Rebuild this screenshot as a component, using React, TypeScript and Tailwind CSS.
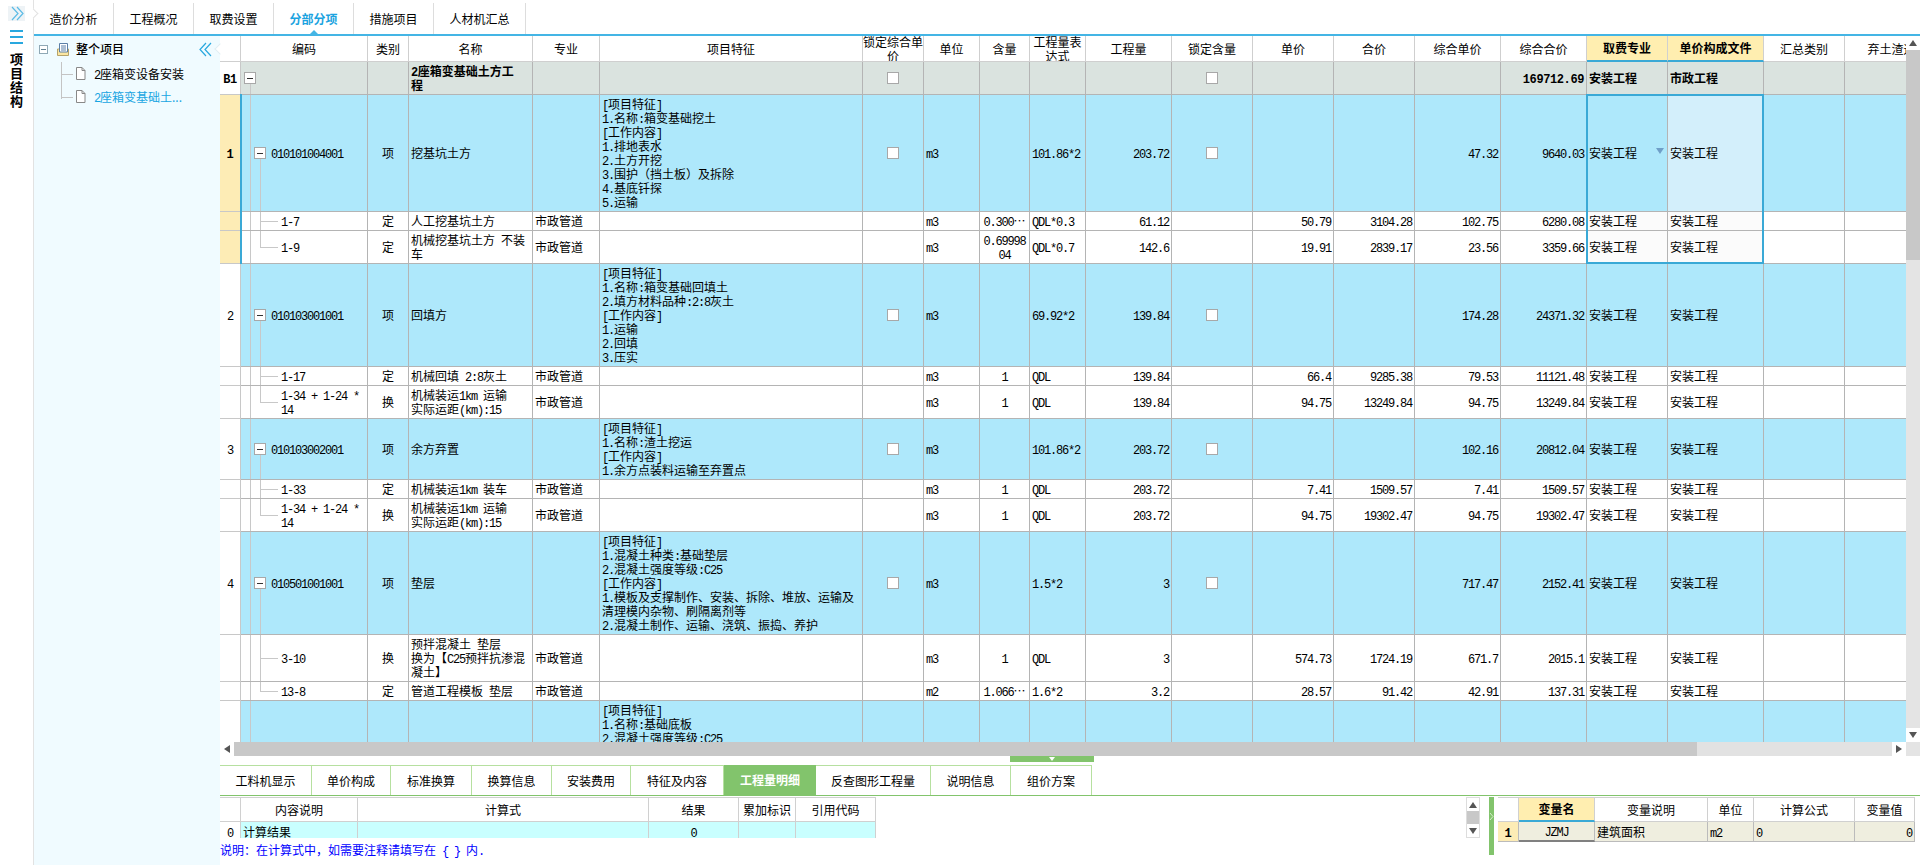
import React from "react";

const Txt = ({ s, bold }: { s: string; bold?: boolean }) => (
  <>
    {s.split(/([\x20-\x7e]+)/).map((p, i) =>
      /^[\x20-\x7e]+$/.test(p) ? (
        <span
          key={i}
          className={
            bold
              ? "font-['Liberation_Mono',monospace] leading-[0] tracking-[-0.4px]"
              : "font-['Liberation_Mono',monospace] leading-[0] tracking-[-1.2px]"
          }
        >
          {p}
        </span>
      ) : (
        p
      )
    )}
  </>
);

const Tri = ({ dir, color = "#555" }: { dir: "up" | "down" | "left" | "right"; color?: string }) => {
  const pts = {
    up: "4,1 8,7 0,7",
    down: "0,1 8,1 4,7",
    left: "7,0 7,8 1,4",
    right: "1,0 1,8 7,4",
  }[dir];
  return (
    <svg width="8" height="8" viewBox="0 0 8 8">
      <polygon points={pts} fill={color} />
    </svg>
  );
};

const Chevrons = ({ flip, color = "#29a8df" }: { flip?: boolean; color?: string }) => (
  <svg width="14" height="15" viewBox="0 0 14 15" fill="none" stroke={color} strokeWidth="1.2">
    {flip ? (
      <>
        <path d="M7 1 L1 7.5 L7 14" />
        <path d="M12 1 L6 7.5 L12 14" />
      </>
    ) : (
      <>
        <path d="M2 1 L8 7.5 L2 14" />
        <path d="M7 1 L13 7.5 L7 14" />
      </>
    )}
  </svg>
);

const DocIcon = () => (
  <svg width="11" height="13" viewBox="0 0 11 13" fill="#fff" stroke="#888" strokeWidth="1">
    <path d="M1.5 .5 H7 L10 3.5 V12.5 H1.5 Z" />
    <path d="M7 .5 V3.5 H10" fill="none" />
  </svg>
);

const RootIcon = () => (
  <svg width="12" height="13" viewBox="0 0 12 13" fill="none">
    <path d="M.5 6 H11.5 V12.5 H.5 Z" fill="#fbe6a2" stroke="#b5a36a" />
    <path d="M2.5 .5 H10.5 V9 H2.5 Z" fill="#fff" stroke="#5b7fa6" />
    <path d="M4 3 H9 M4 5 H9 M4 7 H9" stroke="#5b7fa6" />
  </svg>
);

const MinusBox = ({ cls }: { cls: string }) => (
  <span className={`absolute flex h-[12px] w-[12px] items-center justify-center border border-[#a8a8a8] bg-white ${cls}`}>
    <span className="h-[1px] w-[6px] bg-[#333]" />
  </span>
);

const Check = () => (
  <span className="mx-auto block h-[12px] w-[12px] border border-[#a8a8a8] bg-white" />
);

const topTabs = ["造价分析", "工程概况", "取费设置", "分部分项", "措施项目", "人材机汇总"];

const columns = [
  { w: "w-[21px]", t: "" },
  { w: "w-[127px]", t: "编码" },
  { w: "w-[41px]", t: "类别" },
  { w: "w-[124px]", t: "名称" },
  { w: "w-[67px]", t: "专业" },
  { w: "w-[263px]", t: "项目特征" },
  { w: "w-[61px]", t: "锁定综合单价" },
  { w: "w-[56px]", t: "单位" },
  { w: "w-[50px]", t: "含量" },
  { w: "w-[56px]", t: "工程量表达式" },
  { w: "w-[86px]", t: "工程量" },
  { w: "w-[81px]", t: "锁定含量" },
  { w: "w-[81px]", t: "单价" },
  { w: "w-[81px]", t: "合价" },
  { w: "w-[86px]", t: "综合单价" },
  { w: "w-[86px]", t: "综合合价" },
  { w: "w-[81px]", t: "取费专业" },
  { w: "w-[96px]", t: "单价构成文件" },
  { w: "w-[81px]", t: "汇总类别" },
  { w: "w-[106px]", t: "弃土渣运距" },
];

type Row = {
  idx?: string;
  code: string;
  kind: "bill" | "sub";
  last?: boolean;
  type: string;
  name: string;
  spec?: string;
  feature?: string;
  qty?: string;
  unit?: string;
  expr: string;
  amount: string;
  price?: string;
  total?: string;
  cprice: string;
  ctotal: string;
  h: string;
  selected?: boolean;
};

const rows: Row[] = [
  {
    idx: "1", code: "010101004001", kind: "bill", type: "项", name: "挖基坑土方",
    feature: "[项目特征]\n1.名称:箱变基础挖土\n[工作内容]\n1.排地表水\n2.土方开挖\n3.围护\uff08挡土板\uff09及拆除\n4.基底钎探\n5.运输",
    unit: "m3", expr: "101.86*2", amount: "203.72", cprice: "47.32", ctotal: "9640.03", h: "h-[117px]", selected: true,
  },
  {
    code: "1-7", kind: "sub", type: "定", name: "人工挖基坑土方", spec: "市政管道", unit: "m3", qty: "0.300⋯", expr: "QDL*0.3",
    amount: "61.12", price: "50.79", total: "3104.28", cprice: "102.75", ctotal: "6280.08", h: "h-[19px]", selected: true,
  },
  {
    code: "1-9", kind: "sub", last: true, type: "定", name: "机械挖基坑土方 不装车", spec: "市政管道", unit: "m3", qty: "0.69998\n04", expr: "QDL*0.7",
    amount: "142.6", price: "19.91", total: "2839.17", cprice: "23.56", ctotal: "3359.66", h: "h-[33px]", selected: true,
  },
  {
    idx: "2", code: "010103001001", kind: "bill", type: "项", name: "回填方",
    feature: "[项目特征]\n1.名称:箱变基础回填土\n2.填方材料品种:2:8灰土\n[工作内容]\n1.运输\n2.回填\n3.压实",
    unit: "m3", expr: "69.92*2", amount: "139.84", cprice: "174.28", ctotal: "24371.32", h: "h-[103px]",
  },
  {
    code: "1-17", kind: "sub", type: "定", name: "机械回填 2:8灰土", spec: "市政管道", unit: "m3", qty: "1", expr: "QDL",
    amount: "139.84", price: "66.4", total: "9285.38", cprice: "79.53", ctotal: "11121.48", h: "h-[19px]",
  },
  {
    code: "1-34 + 1-24 *\n14", kind: "sub", last: true, type: "换", name: "机械装运1km 运输\n实际运距(km):15", spec: "市政管道", unit: "m3", qty: "1", expr: "QDL",
    amount: "139.84", price: "94.75", total: "13249.84", cprice: "94.75", ctotal: "13249.84", h: "h-[33px]",
  },
  {
    idx: "3", code: "010103002001", kind: "bill", type: "项", name: "余方弃置",
    feature: "[项目特征]\n1.名称:渣土挖运\n[工作内容]\n1.余方点装料运输至弃置点",
    unit: "m3", expr: "101.86*2", amount: "203.72", cprice: "102.16", ctotal: "20812.04", h: "h-[61px]",
  },
  {
    code: "1-33", kind: "sub", type: "定", name: "机械装运1km 装车", spec: "市政管道", unit: "m3", qty: "1", expr: "QDL",
    amount: "203.72", price: "7.41", total: "1509.57", cprice: "7.41", ctotal: "1509.57", h: "h-[19px]",
  },
  {
    code: "1-34 + 1-24 *\n14", kind: "sub", last: true, type: "换", name: "机械装运1km 运输\n实际运距(km):15", spec: "市政管道", unit: "m3", qty: "1", expr: "QDL",
    amount: "203.72", price: "94.75", total: "19302.47", cprice: "94.75", ctotal: "19302.47", h: "h-[33px]",
  },
  {
    idx: "4", code: "010501001001", kind: "bill", type: "项", name: "垫层",
    feature: "[项目特征]\n1.混凝土种类:基础垫层\n2.混凝土强度等级:C25\n[工作内容]\n1.模板及支撑制作、安装、拆除、堆放、运输及\n清理模内杂物、刷隔离剂等\n2.混凝土制作、运输、浇筑、振捣、养护",
    unit: "m3", expr: "1.5*2", amount: "3", cprice: "717.47", ctotal: "2152.41", h: "h-[103px]",
  },
  {
    code: "3-10", kind: "sub", type: "换", name: "预拌混凝土 垫层\n换为【C25预拌抗渗混\n凝土】", spec: "市政管道", unit: "m3", qty: "1", expr: "QDL",
    amount: "3", price: "574.73", total: "1724.19", cprice: "671.7", ctotal: "2015.1", h: "h-[47px]",
  },
  {
    code: "13-8", kind: "sub", last: true, type: "定", name: "管道工程模板 垫层", spec: "市政管道", unit: "m2", qty: "1.066⋯", expr: "1.6*2",
    amount: "3.2", price: "28.57", total: "91.42", cprice: "42.91", ctotal: "137.31", h: "h-[19px]",
  },
];

const td = "border-r border-b border-[#b4b4b4] px-[2px] whitespace-pre-line overflow-hidden";

const DataRow = ({ r }: { r: Row }) => {
  const bg = r.kind === "bill" ? "bg-[#aee8fb]" : "bg-white";
  const sel2 = r.kind === "sub" && r.selected ? "bg-[#fbfbfb]" : bg;
  return (
    <tr className={r.h}>
      <td className={`border-r border-b border-[#c8c8c8] text-center ${r.selected ? "bg-[#fdecb5]" : "bg-white"} ${r.selected && r.idx ? "font-bold" : ""}`}>
        {r.idx && <Txt s={r.idx} bold={r.selected} />}
      </td>
      <td className={`relative ${td} ${bg}`}>
        <span className="absolute top-0 bottom-0 left-[9px] w-[1px] bg-[#c8c8c8]" />
        {r.kind === "bill" ? (
          <>
            <MinusBox cls="left-[13px] top-1/2 -mt-[6px]" />
            <span className="absolute top-1/2 bottom-0 left-[19px] mt-[6px] w-[1px] bg-[#c8c8c8]" />
            <div className="pl-[28px]"><Txt s={r.code} /></div>
          </>
        ) : (
          <>
            <span className={`absolute top-0 left-[19px] w-[1px] bg-[#c8c8c8] ${r.last ? "bottom-1/2" : "bottom-0"}`} />
            <span className="absolute top-1/2 left-[19px] h-[1px] w-[18px] bg-[#c8c8c8]" />
            <div className="pl-[38px]"><Txt s={r.code} /></div>
          </>
        )}
      </td>
      <td className={`${td} ${bg} text-center`}>{r.type}</td>
      <td className={`${td} ${bg}`}><Txt s={r.name} /></td>
      <td className={`${td} ${bg}`}>{r.spec}</td>
      <td className={`${td} ${bg}`}>{r.feature && <Txt s={r.feature} />}</td>
      <td className={`${td} ${bg}`}>{r.kind === "bill" && <Check />}</td>
      <td className={`${td} ${bg}`}><Txt s={r.unit ?? ""} /></td>
      <td className={`${td} ${bg} text-center`}>{r.qty && <Txt s={r.qty} />}</td>
      <td className={`${td} ${bg}`}><Txt s={r.expr} /></td>
      <td className={`${td} ${bg} text-right`}><Txt s={r.amount} /></td>
      <td className={`${td} ${bg}`}>{r.kind === "bill" && <Check />}</td>
      <td className={`${td} ${bg} text-right`}>{r.price && <Txt s={r.price} />}</td>
      <td className={`${td} ${bg} text-right`}>{r.total && <Txt s={r.total} />}</td>
      <td className={`${td} ${bg} text-right`}><Txt s={r.cprice} /></td>
      <td className={`${td} ${bg} text-right`}><Txt s={r.ctotal} /></td>
      <td className={`relative ${td} ${sel2}`}>
        安装工程
        {r.idx === "1" && (
          <span className="absolute top-1/2 right-[3px] -mt-[6px] flex">
            <Tri dir="down" color="#6f9fc8" />
          </span>
        )}
      </td>
      <td className={`${td} ${r.idx === "1" ? "bg-[#d3effb]" : sel2}`}>安装工程</td>
      <td className={`${td} ${bg}`} />
      <td className={`${td} ${bg}`} />
    </tr>
  );
};

const bottomTabs = ["工料机显示", "单价构成", "标准换算", "换算信息", "安装费用", "特征及内容", "工程量明细", "反查图形工程量", "说明信息", "组价方案"];
const tabWidths = ["w-[92px]", "w-[79px]", "w-[81px]", "w-[80px]", "w-[79px]", "w-[93px]", "w-[92px]", "w-[115px]", "w-[80px]", "w-[81px]"];

const App = () => {
  return (
    <div className="flex h-[865px] w-[1920px] overflow-hidden bg-white font-['Noto_Sans_CJK_SC',sans-serif] text-[12px] leading-[14px] text-black">
      <div className="flex w-[34px] shrink-0 flex-col items-center border-r border-[#e2e2e2]">
        <div className="mt-[6px] flex h-[15px] w-[17px] items-center justify-center bg-[#eef3f6]">
          <Chevrons color="#5bbbe6" />
        </div>
        <div className="mt-[9px] flex w-[13px] flex-col gap-[4px]">
          <span className="h-[2px] bg-[#29a8df]" />
          <span className="h-[2px] bg-[#29a8df]" />
          <span className="h-[2px] bg-[#29a8df]" />
        </div>
        <div className="mt-[8px] w-[13px] text-center text-[13px] leading-[14px] font-bold">项目结构</div>
      </div>

      <div className="flex min-w-0 flex-1 flex-col">
        <div className="flex h-[34px] items-end">
          {topTabs.map((t, i) => (
            <div
              key={t}
              className={`relative flex h-[31px] items-center justify-center border-r border-[#dddddd] ${i === 5 ? "w-[92px]" : "w-[80px]"} ${i === 3 ? "font-bold text-[#1ba3e0]" : ""}`}
            >
              {i === 0 && (
                <span className="absolute top-[7px] left-[-4px] h-[7px] w-[7px] rotate-45 border-t border-r border-[#e2e2e2] bg-white" />
              )}
              {t}
              {i === 3 && (
                <span className="absolute bottom-0 left-1/2 -ml-[4px] h-0 w-0 border-r-[4px] border-b-[4px] border-l-[4px] border-r-transparent border-b-[#44b5e5] border-l-transparent" />
              )}
            </div>
          ))}
        </div>
        <div className="h-[2px] bg-[#44b5e5]" />

        <div className="flex min-h-0 flex-1">
          <div className="relative w-[186px] shrink-0 bg-[#f0fbff]">
            <span className="absolute top-[9px] right-[-4px] h-[8px] w-[8px] rotate-45 border-b border-l border-[#dfeef3] bg-white" />
            <div className="flex h-[26px] items-center">
              <span className="ml-[5px] flex h-[9px] w-[9px] items-center justify-center border border-[#8fa8b5] bg-white">
                <span className="h-[1px] w-[5px] bg-[#5f7f90]" />
              </span>
              <span className="ml-[9px] flex"><RootIcon /></span>
              <span className="ml-[7px] font-medium">整个项目</span>
              <span className="relative mr-[7px] ml-auto flex"><Chevrons flip /></span>
            </div>
            <div className="relative mt-[0px] pl-[41px]">
              <span className="absolute top-0 left-[27px] h-[37px] w-[1px] bg-[#c4c4c4]" />
              <div className="relative flex h-[23px] items-center">
                <span className="absolute left-[-14px] top-[12px] h-[1px] w-[12px] bg-[#c4c4c4]" />
                <DocIcon />
                <span className="ml-[8px]"><Txt s="2" />座箱变设备安装</span>
              </div>
              <div className="relative flex h-[23px] items-center text-[#18a5e2]">
                <span className="absolute left-[-14px] top-[12px] h-[1px] w-[12px] bg-[#c4c4c4]" />
                <DocIcon />
                <span className="ml-[8px]"><Txt s="2" />座箱变基础土...</span>
              </div>
            </div>
          </div>

          <div className="flex min-w-0 flex-1 flex-col">
            <div className="flex h-[706px]">
              <div className="relative min-w-0 flex-1 overflow-hidden">
                <table className="w-[1731px] table-fixed border-separate border-spacing-0">
                  <colgroup>
                    {columns.map((c, i) => (
                      <col key={i} className={c.w} />
                    ))}
                  </colgroup>
                  <thead>
                    <tr className="h-[26px]">
                      {columns.map((c, i) => {
                        const hi = i === 16 || i === 17;
                        return (
                          <th
                            key={i}
                            className={`border-r ${hi ? "border-b-2 border-r-[#d0d0d0] border-b-[#3aa9d6] bg-[#ffeeb0] font-bold" : "border-b border-[#cfcfcf] font-normal"}`}
                          >
                            <div className={`flex items-center justify-center overflow-hidden ${hi ? "h-[24px]" : "h-[25px]"}`}>{c.t}</div>
                          </th>
                        );
                      })}
                    </tr>
                  </thead>
                  <tbody>
                    <tr className="h-[33px]">
                      <td className="border-r border-b border-[#c8c8c8] bg-white text-center font-bold"><Txt s="B1" bold /></td>
                      <td className={`relative ${td} bg-[#dae3df]`}>
                        <MinusBox cls="left-[3px] top-1/2 -mt-[6px]" />
                        <span className="absolute top-1/2 bottom-0 left-[9px] mt-[6px] w-[1px] bg-[#c8c8c8]" />
                      </td>
                      <td className={`${td} bg-[#dae3df]`} />
                      <td className={`${td} bg-[#dae3df] font-bold`}><Txt s={"2座箱变基础土方工\n程"} bold /></td>
                      <td className={`${td} bg-[#dae3df]`} />
                      <td className={`${td} bg-[#dae3df]`} />
                      <td className={`${td} bg-[#dae3df]`}><Check /></td>
                      <td className={`${td} bg-[#dae3df]`} />
                      <td className={`${td} bg-[#dae3df]`} />
                      <td className={`${td} bg-[#dae3df]`} />
                      <td className={`${td} bg-[#dae3df]`} />
                      <td className={`${td} bg-[#dae3df]`}><Check /></td>
                      <td className={`${td} bg-[#dae3df]`} />
                      <td className={`${td} bg-[#dae3df]`} />
                      <td className={`${td} bg-[#dae3df]`} />
                      <td className={`${td} bg-[#dae3df] text-right font-bold`}><Txt s="169712.69" bold /></td>
                      <td className={`${td} bg-[#dae3df] font-bold`}>安装工程</td>
                      <td className={`${td} bg-[#dae3df] font-bold`}>市政工程</td>
                      <td className={`${td} bg-[#dae3df]`} />
                      <td className={`${td} bg-[#dae3df]`} />
                    </tr>
                    {rows.map((r, i) => (
                      <DataRow key={i} r={r} />
                    ))}
                    <tr className="h-[100px]">
                      <td className="border-r border-[#c8c8c8] bg-white" />
                      <td className={`relative ${td} bg-[#aee8fb]`}>
                        <span className="absolute top-0 bottom-0 left-[9px] w-[1px] bg-[#c8c8c8]" />
                      </td>
                      <td className={`${td} bg-[#aee8fb]`} />
                      <td className={`${td} bg-[#aee8fb]`} />
                      <td className={`${td} bg-[#aee8fb]`} />
                      <td className={`${td} bg-[#aee8fb] align-top pt-[2px]`}>
                        <Txt s={"[项目特征]\n1.名称:基础底板\n2.混凝土强度等级:C25"} />
                      </td>
                      {columns.slice(6).map((_, i) => (
                        <td key={i} className={`${td} bg-[#aee8fb]`} />
                      ))}
                    </tr>
                  </tbody>
                </table>
                {/* current row marker and selected cells sit over the table */}
                <div className="pointer-events-none absolute top-[58px] left-[20px] h-[170px] w-[2px] bg-[#3aa9d6]" />
                <div className="pointer-events-none absolute top-[58px] left-[1366px] h-[170px] w-[178px] border-2 border-[#3aa9d6]" />
              </div>

              <div className="flex w-[14px] shrink-0 flex-col bg-[#e4e4e4]">
                <div className="flex h-[14px] items-center justify-center bg-white"><Tri dir="up" /></div>
                <div className="h-[210px] bg-[#c8c8c8]" />
                <div className="flex-1" />
                <div className="flex h-[14px] items-center justify-center bg-white"><Tri dir="down" /></div>
              </div>
            </div>

            <div className="flex h-[14px]">
              <div className="flex w-[14px] items-center justify-center bg-white"><Tri dir="left" /></div>
              <div className="w-[1463px] bg-[#c8c8c8]" />
              <div className="flex-1 bg-[#e2e2e2]" />
              <div className="flex w-[14px] items-center justify-center bg-white"><Tri dir="right" /></div>
              <div className="w-[14px] bg-[#e4e4e4]" />
            </div>

            <div className="relative h-[9px]">
              <div className="absolute top-0 left-[790px] flex h-[6px] w-[84px] justify-center bg-[#82c46c]">
                <span className="mt-[1px] h-0 w-0 border-t-[4px] border-r-[3px] border-l-[3px] border-t-white border-r-transparent border-l-transparent" />
              </div>
            </div>

            <div className="flex h-[31px] border-b border-[#82c46c]">
              {bottomTabs.map((t, i) => (
                <div
                  key={t}
                  className={`flex items-center justify-center ${tabWidths[i]} ${
                    i === 6 ? "bg-[#82c46c] font-bold text-white" : "border-t border-r border-[#b6e0a0]"
                  }`}
                >
                  {t}
                </div>
              ))}
            </div>

            <div className="flex flex-1 pt-[1px]">
              <div className="w-[1246px]">
                <div className="h-[41px] overflow-hidden">
                  <table className="w-[656px] table-fixed border-separate border-spacing-0">
                    <colgroup>
                      <col className="w-[21px]" />
                      <col className="w-[117px]" />
                      <col className="w-[291px]" />
                      <col className="w-[90px]" />
                      <col className="w-[57px]" />
                      <col className="w-[80px]" />
                    </colgroup>
                    <thead>
                      <tr className="h-[25px]">
                        {["", "内容说明", "计算式", "结果", "累加标识", "引用代码"].map((t, i) => (
                          <th key={i} className="border-t border-r border-b border-[#d0d0d0] font-normal">{t}</th>
                        ))}
                      </tr>
                    </thead>
                    <tbody>
                      <tr className="h-[20px] bg-[#c9ffff]">
                        <td className="border-r border-[#d0d0d0] bg-white text-center"><Txt s="0" /></td>
                        <td className="border-r border-[#d0d0d0] px-[2px]">计算结果</td>
                        <td className="border-r border-[#d0d0d0]" />
                        <td className="border-r border-[#d0d0d0] text-center"><Txt s="0" /></td>
                        <td className="border-r border-[#d0d0d0]" />
                        <td className="border-r border-[#d0d0d0]" />
                      </tr>
                    </tbody>
                  </table>
                </div>
                <div className="mt-[5px] text-[#0000ff]">
                  <Txt s={"说明\uff1a在计算式中\uff0c如需要注释请填写在 { } 内."} />
                </div>
              </div>

              <div className="flex h-[41px] w-[14px] shrink-0 flex-col border border-[#dddddd] bg-white">
                <div className="flex h-[13px] items-center justify-center"><Tri dir="up" /></div>
                <div className="flex-1 bg-[#c8c8c8]" />
                <div className="flex h-[13px] items-center justify-center"><Tri dir="down" /></div>
              </div>

              <div className="ml-[9px] flex h-[58px] w-[5px] shrink-0 items-start justify-center bg-[#82c46c] pt-[15px]">
                <svg width="5" height="9" viewBox="0 0 5 9" fill="none" stroke="#d5eecb">
                  <path d="M1 1 L4 4.5 L1 8" />
                </svg>
              </div>

              <table className="mb-auto ml-[4px] w-[417px] table-fixed border-separate border-spacing-0">
                <colgroup>
                  <col className="w-[21px]" />
                  <col className="w-[76px]" />
                  <col className="w-[113px]" />
                  <col className="w-[46px]" />
                  <col className="w-[101px]" />
                  <col className="w-[60px]" />
                </colgroup>
                <thead>
                  <tr className="h-[25px]">
                    <th className="border-t border-r border-b border-[#d0d0d0] font-normal" />
                    <th className="border-t border-r border-b-2 border-t-[#d0d0d0] border-r-[#d0d0d0] border-b-[#3aa9d6] bg-[#ffeeb0] font-bold">变量名</th>
                    {["变量说明", "单位", "计算公式", "变量值"].map((t) => (
                      <th key={t} className="border-t border-r border-b border-[#d0d0d0] font-normal">{t}</th>
                    ))}
                  </tr>
                </thead>
                <tbody>
                  <tr className="h-[20px] bg-[#efeedf]">
                    <td className="border-r border-b border-[#bbbbbb] bg-[#fdecb5] text-center font-bold"><Txt s="1" bold /></td>
                    <td className="border-r border-b-2 border-r-[#bbbbbb] border-b-[#808080] text-center"><Txt s="JZMJ" /></td>
                    <td className="border-r border-b border-[#bbbbbb] px-[2px]">建筑面积</td>
                    <td className="border-r border-b border-[#bbbbbb] px-[2px]"><Txt s="m2" /></td>
                    <td className="border-r border-b border-[#bbbbbb] px-[2px]"><Txt s="0" /></td>
                    <td className="border-r border-b border-[#bbbbbb] px-[2px] text-right"><Txt s="0" /></td>
                  </tr>
                </tbody>
              </table>
            </div>
          </div>
        </div>
      </div>
    </div>
  );
};

export default App;
